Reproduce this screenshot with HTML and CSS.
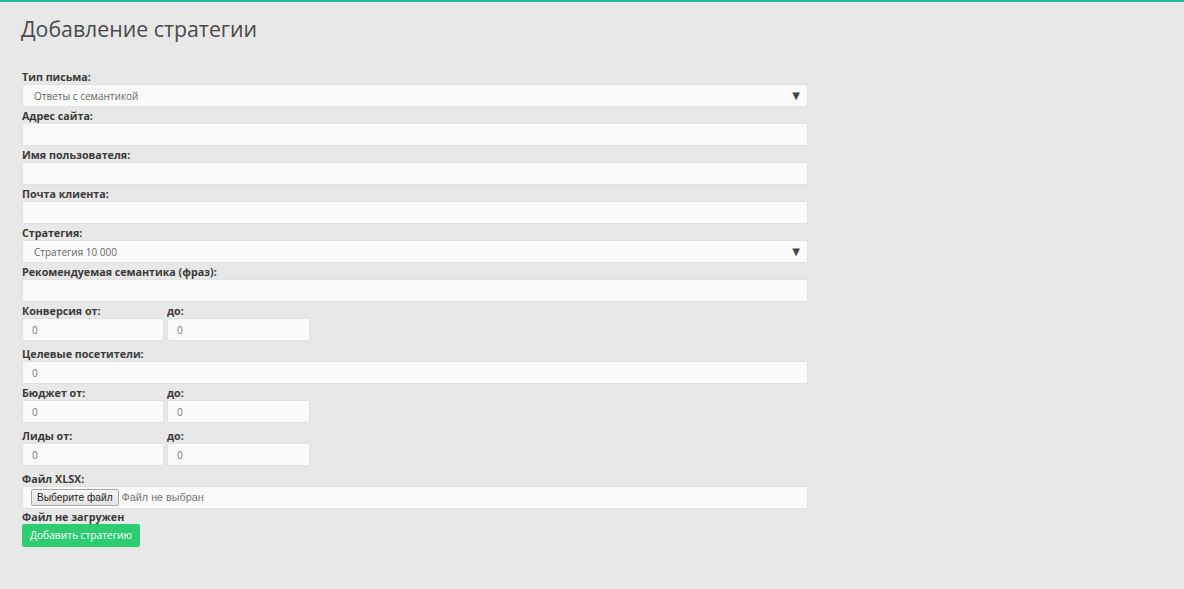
FILE: index.html
```html
<!DOCTYPE html>
<html lang="ru">
<head>
<meta charset="utf-8">
<title>Добавление стратегии</title>
<link rel="stylesheet" href="styles.css">
</head>
<body>
<div class="page">
  <h1 class="title">Добавление стратегии</h1>
  <form class="form">
    <div class="field">
      <label class="label">Тип письма:</label>
      <div class="select"><span class="select-text">Ответы с семантикой</span><span class="arrow">&#9660;</span></div>
    </div>
    <div class="field">
      <label class="label">Адрес сайта:</label>
      <div class="input"></div>
    </div>
    <div class="field">
      <label class="label">Имя пользователя:</label>
      <div class="input"></div>
    </div>
    <div class="field">
      <label class="label">Почта клиента:</label>
      <div class="input"></div>
    </div>
    <div class="field">
      <label class="label">Стратегия:</label>
      <div class="select"><span class="select-text">Стратегия 10 000</span><span class="arrow">&#9660;</span></div>
    </div>
    <div class="field">
      <label class="label">Рекомендуемая семантика (фраз):</label>
      <div class="input"></div>
    </div>
    <div class="pair">
      <div class="col">
        <label class="label">Конверсия от:</label>
        <div class="input small">0</div>
      </div>
      <div class="col">
        <label class="label">до:</label>
        <div class="input small">0</div>
      </div>
    </div>
    <div class="field">
      <label class="label">Целевые посетители:</label>
      <div class="input">0</div>
    </div>
    <div class="pair">
      <div class="col">
        <label class="label">Бюджет от:</label>
        <div class="input small">0</div>
      </div>
      <div class="col">
        <label class="label">до:</label>
        <div class="input small">0</div>
      </div>
    </div>
    <div class="pair">
      <div class="col">
        <label class="label">Лиды от:</label>
        <div class="input small">0</div>
      </div>
      <div class="col">
        <label class="label">до:</label>
        <div class="input small">0</div>
      </div>
    </div>
    <div class="field">
      <label class="label">Файл XLSX:</label>
      <div class="input file"><span class="file-btn">Выберите файл</span><span class="file-text">Файл не выбран</span></div>
    </div>
    <div class="label status">Файл не загружен</div>
    <button type="button" class="submit">Добавить стратегию</button>
  </form>
</div>
</body>
</html>
```

FILE: styles.css
```css
html, body {
  margin: 0;
  padding: 0;
}
body {
  background: #e8e8e8;
  border-top: 2px solid #1abc9c;
  font-family: "Open Sans", "Noto Sans", sans-serif;
  color: #333;
  height: 587px;
}
.page {
  padding-left: 22px;
}
.title {
  margin: 12px 0 0 -1px;
  font-size: 21.3px;
  line-height: 30px;
  font-weight: 400;
  color: #4a4a4a;
}
.form {
  margin-top: 24px;
  width: 786px;
}
.field {
  display: flex;
  flex-direction: column;
}
.label {
  display: block;
  box-sizing: border-box;
  height: 16px;
  padding-top: 1px;
  font-size: 10.7px;
  font-weight: 700;
  line-height: 16px;
  color: #3a3a3a;
}
.input, .select {
  box-sizing: border-box;
  height: 23px;
  background: #fafafa;
  border: 1px solid #e2e2e2;
  border-radius: 2px;
  font-size: 10px;
  line-height: 23px;
  color: #777;
  padding-left: 9px;
}
.select {
  position: relative;
  padding-left: 11px;
  color: #666;
}
.arrow {
  position: absolute;
  right: 7px;
  top: 0;
  line-height: 21px;
  font-size: 10px;
  color: #444;
  font-family: "DejaVu Sans", sans-serif;
}
.pair {
  display: flex;
  gap: 3px;
  margin-bottom: 4px;
}
.col {
  display: flex;
  flex-direction: column;
}
.input.small {
  width: 143px;
}
.pair .col:first-child .input.small {
  width: 142px;
}
.file {
  display: flex;
  align-items: center;
  padding-left: 8px;
}
.file-btn {
  box-sizing: border-box;
  height: 17px;
  padding: 0 5px;
  border: 1px solid #a9a9a9;
  border-radius: 2px;
  background: linear-gradient(#f6f6f6, #e3e3e3);
  font-family: "Liberation Sans", Arial, sans-serif;
  font-size: 10.2px;
  line-height: 15px;
  color: #222;
}
.file-text {
  margin-left: 3px;
  font-family: "Liberation Sans", Arial, sans-serif;
  font-size: 10.8px;
  line-height: 21px;
  color: #777;
}
.status {
  margin-top: -1px;
}
.submit {
  display: block;
  box-sizing: border-box;
  height: 23px;
  width: 118px;
  padding: 0;
  border: none;
  border-radius: 2px;
  background: #2ecc71;
  color: #fff;
  font-family: "Open Sans", "Noto Sans", sans-serif;
  font-size: 10.2px;
  line-height: 23px;
  text-align: center;
}
```
